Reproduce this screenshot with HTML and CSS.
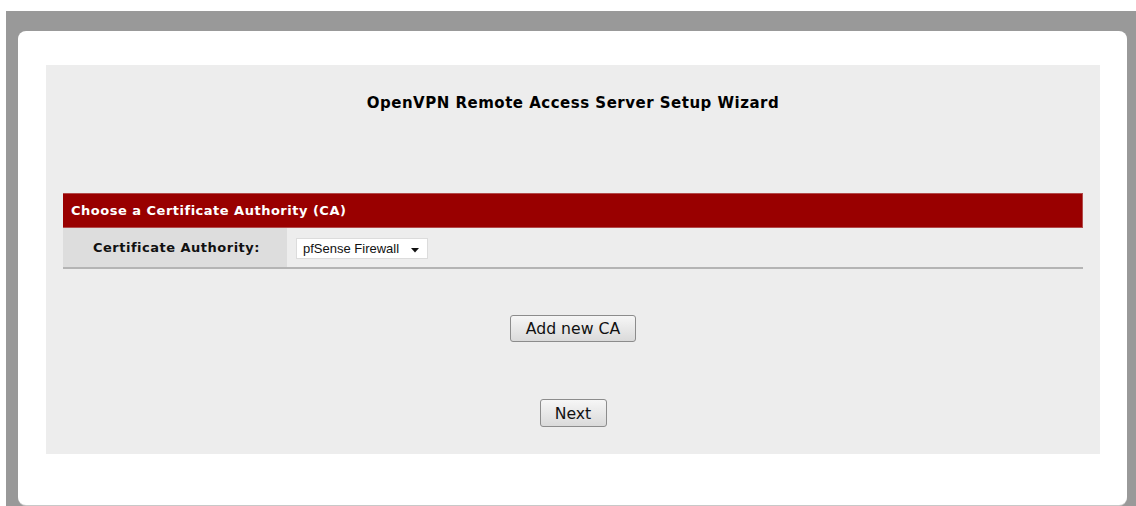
FILE: index.html
```html
<!DOCTYPE html>
<html>
<head>
<meta charset="utf-8">
<title>OpenVPN Remote Access Server Setup Wizard</title>
<link rel="stylesheet" href="styles.css">
</head>
<body>
<div class="frame">
  <div class="card">
    <div class="panel">
      <h1 class="title">OpenVPN Remote Access Server Setup Wizard</h1>
      <div class="section">
        <div class="section-head">Choose a Certificate Authority (CA)</div>
        <div class="row">
          <div class="row-label">Certificate Authority:</div>
          <div class="row-value">
            <div class="select">
              <span class="select-text">pfSense Firewall</span>
              <svg class="select-arrow" width="8" height="5" viewBox="0 0 8 5"><path d="M0 0H8L4 4.5Z" fill="#111"/></svg>
            </div>
          </div>
        </div>
      </div>
      <div class="actions">
        <button class="btn btn-add">Add new CA</button>
        <button class="btn btn-next">Next</button>
      </div>
    </div>
  </div>
</div>
</body>
</html>
```

FILE: styles.css
```css
html, body {
  margin: 0;
  padding: 0;
  background: #ffffff;
}

body {
  height: 506px;
  overflow: hidden;
  padding-top: 11px;
  box-sizing: border-box;
}

.frame {
  margin-left: 6px;
  height: 495px;
  background: #999999;
  padding: 20px 9px 0 12px;
  box-sizing: border-box;
}

.card {
  background: #ffffff;
  height: 474px;
  border-radius: 8px;
  box-shadow: 0 1px 0 0 #c8c8c8;
  padding: 34px 27px 0 28px;
  box-sizing: border-box;
}

.panel {
  background: #ededed;
  height: 389px;
  padding: 0 17px;
  box-sizing: border-box;
  display: flex;
  flex-direction: column;
}

.title {
  margin: 0;
  height: 128px;
  padding-top: 29px;
  box-sizing: border-box;
  text-align: center;
  font-family: "DejaVu Sans", Verdana, sans-serif;
  font-weight: bold;
  font-size: 15px;
  letter-spacing: 0.5px;
  color: #000;
}

.section-head {
  background: #990000;
  border: 1px solid #b24a4a;
  border-left: none;
  height: 35px;
  box-sizing: border-box;
  color: #fff;
  font-family: "DejaVu Sans", Verdana, sans-serif;
  font-weight: bold;
  font-size: 13px;
  letter-spacing: 0.5px;
  display: flex;
  align-items: center;
  padding-left: 8px;
}

.row {
  display: flex;
  height: 41px;
  border-bottom: 2px solid #b4b4b4;
  box-sizing: border-box;
}

.row-label {
  width: 224px;
  background: #dddddd;
  font-family: "DejaVu Sans", Verdana, sans-serif;
  font-weight: bold;
  font-size: 13px;
  letter-spacing: 0.5px;
  color: #111;
  display: flex;
  align-items: center;
  justify-content: flex-end;
  padding-right: 27px;
  box-sizing: border-box;
}

.row-value {
  flex: 1;
  display: flex;
  align-items: center;
  padding-left: 9px;
}

.select {
  width: 132px;
  height: 21px;
  background: #fff;
  border: 1px solid #dcdcdc;
  box-sizing: border-box;
  display: flex;
  align-items: center;
  padding-left: 6px;
  font-family: "Liberation Sans", Arial, sans-serif;
  font-size: 13px;
  color: #111;
  margin-top: 1px;
}

.select-text {
  flex: 1;
}

.select-arrow {
  margin-right: 8px;
  margin-top: 4px;
}

.actions {
  display: flex;
  flex-direction: column;
  align-items: center;
}

.btn {
  font-family: "DejaVu Sans", Tahoma, sans-serif;
  font-size: 15.7px;
  color: #111;
  border: 1px solid #8c8c8c;
  border-radius: 3px;
  background: linear-gradient(#f6f6f6, #e8e8e8 50%, #dadada);
  padding: 0;
  box-sizing: border-box;
}

.btn-add {
  width: 126px;
  height: 27px;
  margin-top: 46px;
}

.btn-next {
  width: 67px;
  height: 28px;
  margin-top: 57px;
}
```
